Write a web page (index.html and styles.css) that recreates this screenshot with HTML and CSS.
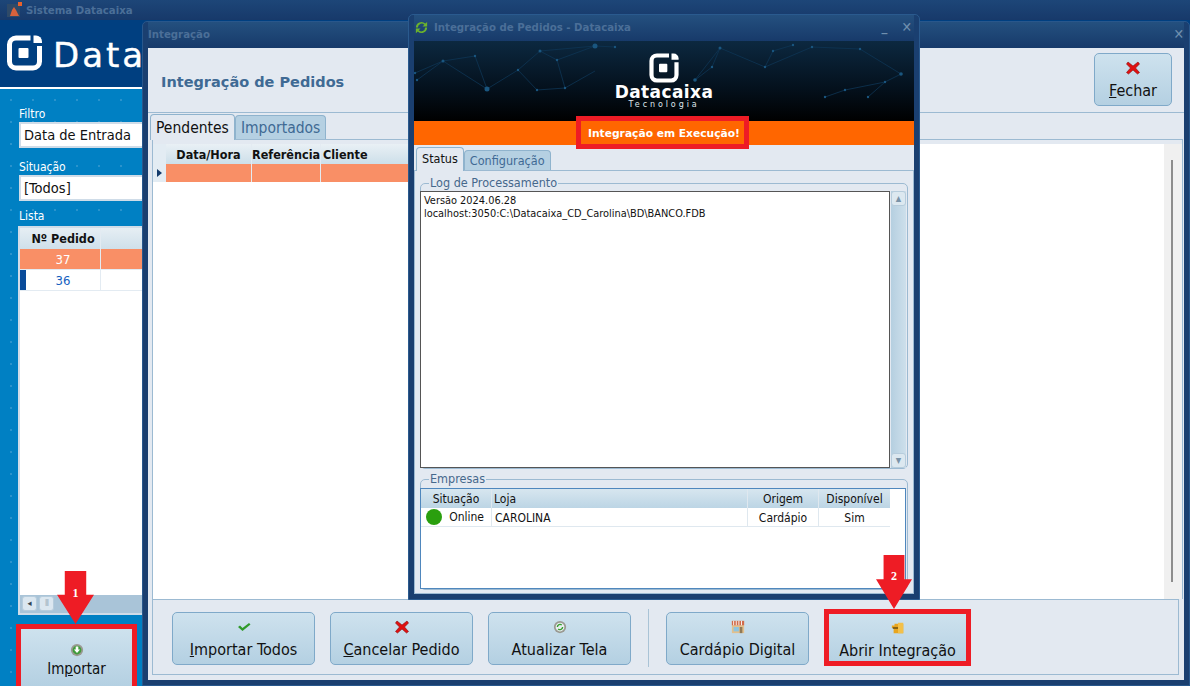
FILE: index.html
```html
<!DOCTYPE html>
<html lang="pt-BR">
<head>
<meta charset="utf-8">
<title>Sistema Datacaixa</title>
<link rel="stylesheet" href="styles.css">
</head>
<body>
<svg class="defs" width="0" height="0" aria-hidden="true">
  <symbol id="logo" viewBox="0 0 36 36">
    <path d="M24 3H9.500A6.500 6.500 0 0 0 3 9.500V26.500A6.500 6.500 0 0 0 9.500 33H26.500A6.500 6.500 0 0 0 33 26.500V11" fill="none" stroke="#fff" stroke-width="5"/>
    <rect x="12" y="13" width="10" height="10" rx="1" fill="#fff"/>
    <path d="M27 0.500h2.500a6 6 0 0 1 6 6V8H27z" fill="#fff"/>
  </symbol>
  <symbol id="xred" viewBox="0 0 14 14">
    <path d="M2 1l5 4 5-4 1.500 2-4 4 4 4.500-2 1.500-4.500-4-4.500 4-2-1.500 4-4.500-4-4z" fill="#e01010" stroke="#8c0a0a" stroke-width=".6"/>
  </symbol>
</svg>

<div class="desktop">
  <div class="titlebar">
    <svg class="app-icon" viewBox="0 0 16 16"><rect x="1" y="2" width="13" height="13" fill="#2f4a68"/><path d="M4 14l2-6 2-3 2 3 3 6z" fill="#d8623c"/><rect x="12" y="0" width="4" height="4" fill="#e8622c"/></svg>
    <span class="titletext">Sistema Datacaixa</span>
  </div>
  <div class="app-head">
    <svg class="head-logo"><use href="#logo"/></svg>
    <span class="head-word">Data</span>
  </div>
  <div class="sidebar">
    <label class="side-label">Filtro</label>
    <div class="side-input">Data de Entrada</div>
    <label class="side-label second">Situação</label>
    <div class="side-input">[Todos]</div>
    <label class="side-label third">Lista</label>
    <div class="side-list">
      <div class="list-head"><span class="list-ind"></span><b class="list-col">Nº Pedido</b><span class="list-rest"></span></div>
      <div class="list-row selected"><span class="list-ind"></span><span class="list-col">37</span><span class="list-rest"></span></div>
      <div class="list-row blue"><span class="list-ind"></span><span class="list-col">36</span><span class="list-rest"></span></div>
      <div class="list-fill"></div>
      <div class="list-scroll">
        <span class="sb-btn">◂</span><span class="sb-btn thumb">⦀</span>
      </div>
    </div>
    <button class="btn import-btn">
      <svg class="ico" viewBox="0 0 16 16"><circle cx="8" cy="8" r="7" fill="#9a9a92"/><circle cx="8" cy="8" r="5" fill="#3f9c3a"/><path d="M6.500 4h3v3.500h2L8 11.500 4.500 7.500h2z" fill="#fff"/></svg>
      <span>Im<u>p</u>ortar</span>
    </button>
  </div>

  <section class="win win-integ">
    <header class="win-title">
      <span class="titletext">Integração</span>
      <span class="win-x">✕</span>
    </header>
    <div class="win-body">
      <div class="integ-head">
        <h1 class="integ-h">Integração de Pedidos</h1>
        <button class="btn close-btn"><svg class="ico"><use href="#xred"/></svg><span><u>F</u>echar</span></button>
      </div>
      <div class="tabs integ-tabs">
        <span class="tab active">Pendentes</span>
        <span class="tab">Importados</span>
      </div>
      <div class="integ-panel">
        <div class="grid-wrap">
          <div class="grid-white">
            <div class="g-head"><span class="g-ind"></span><b class="g-a">Data/Hora</b><b class="g-b">Referência</b><b class="g-c">Cliente</b></div>
            <div class="g-row"><span class="g-ind"><i class="tri"></i></span><span class="g-a"></span><span class="g-b"></span><span class="g-c"></span></div>
          </div>
          <div class="grid-side"><span class="grid-bar"></span></div>
        </div>
      </div>
      <div class="actions">
        <button class="btn act"><svg class="ico" viewBox="0 0 14 14"><path d="M1 7l2-1.500 2.500 2.500L12 3l1.500 1.500L5.500 11z" fill="#2f9a2a"/></svg><span><u>I</u>mportar Todos</span></button>
        <button class="btn act"><svg class="ico"><use href="#xred"/></svg><span><u>C</u>ancelar Pedido</span></button>
        <button class="btn act"><svg class="ico" viewBox="0 0 16 16"><circle cx="8" cy="8" r="7" fill="#9a9a92"/><circle cx="8" cy="8" r="5" fill="#e8eef0"/><path d="M5 8a3 3 0 0 1 5-2.200M11 8a3 3 0 0 1-5 2.200" fill="none" stroke="#35a02f" stroke-width="1.600"/></svg><span>Atualizar Tela</span></button>
        <span class="act-sep"></span>
        <button class="btn act"><svg class="ico" viewBox="0 0 16 16"><rect x="1" y="1" width="14" height="14" fill="#e2c08e"/><rect x="1" y="1" width="14" height="5" fill="#d06a4a"/><path d="M3 1v5M6 1v5M9 1v5M12 1v5" stroke="#fff"/><rect x="3" y="8" width="6" height="5" fill="#8ec4e0"/><rect x="10" y="8" width="3" height="7" fill="#8f7a58"/></svg><span>Cardápio Digital</span></button>
        <button class="btn act open-btn"><svg class="ico" viewBox="0 0 16 16"><path d="M4 3h10v11H3V8H1V5h3z" fill="#e8a51e"/><path d="M8 2h6v12H8z" fill="#f3c04a"/><rect x="2" y="7" width="6" height="2" fill="#7a5a12"/></svg><span>Abrir Integração</span></button>
      </div>
    </div>
  </section>

  <section class="win win-popup">
    <header class="win-title">
      <svg class="sync" viewBox="0 0 16 16"><path d="M2 8a6 6 0 0 1 10-4.300L14 2v5H9l2-2A4 4 0 0 0 4.200 8zM14 8a6 6 0 0 1-10 4.300L2 14V9h5l-2 2a4 4 0 0 0 6.800-3z" fill="#6cb32c"/></svg>
      <span class="titletext">Integração de Pedidos - Datacaixa</span>
      <span class="win-min">_</span>
      <span class="win-x">✕</span>
    </header>
    <div class="banner">
      <svg class="net" viewBox="0 0 500 80" preserveAspectRatio="none">
        <g stroke="#0e3554" stroke-width=".8" fill="none">
          <path d="M3 39L29 20L73 48L61 15L29 20M73 48L104 29L126 10L181 5M104 29L123 49L151 47L143 19L181 5M126 10L143 19M1 32L29 20M201 6L181 5M151 47L181 30"/>
          <path d="M298 26L281 39L306 7L351 26L359 10L379 4M351 26L398 6L446 8L487 33L471 41L431 49L411 56M306 7L298 26M454 56L471 41"/>
        </g>
        <g fill="#1a567f">
          <circle cx="181" cy="5" r="2.500"/><circle cx="73" cy="48" r="2.500"/><circle cx="29" cy="20" r="1.500"/><circle cx="126" cy="10" r="1.500"/><circle cx="104" cy="29" r="1.200"/><circle cx="61" cy="15" r="1.200"/><circle cx="3" cy="39" r="1.200"/><circle cx="1" cy="32" r="1.200"/><circle cx="123" cy="49" r="1.200"/><circle cx="151" cy="47" r="1.200"/><circle cx="143" cy="19" r="1.200"/><circle cx="201" cy="6" r="1.200"/><circle cx="306" cy="7" r="1.500"/><circle cx="359" cy="10" r="1.200"/><circle cx="379" cy="4" r="1.200"/><circle cx="398" cy="6" r="1.200"/><circle cx="446" cy="8" r="1.200"/><circle cx="487" cy="33" r="1.800"/><circle cx="431" cy="49" r="1.200"/><circle cx="351" cy="26" r="1.200"/><circle cx="298" cy="26" r="1.200"/><circle cx="281" cy="39" r="1.800"/><circle cx="471" cy="41" r="1.200"/><circle cx="411" cy="56" r="1.200"/><circle cx="454" cy="56" r="1.200"/>
        </g>
      </svg>
      <svg class="banner-logo"><use href="#logo"/></svg>
      <span class="banner-word">Datacaixa</span>
      <span class="banner-sub">Tecnologia</span>
    </div>
    <div class="status-bar">Integração em Execução!</div>
    <div class="tabs popup-tabs">
      <span class="tab active">Status</span>
      <span class="tab">Configuração</span>
    </div>
    <div class="popup-panel">
      <fieldset class="fs fs-log">
        <legend>Log de Processamento</legend>
        <div class="log-wrap">
          <div class="log">Versão 2024.06.28<br>localhost:3050:C:\Datacaixa_CD_Carolina\BD\BANCO.FDB</div>
          <div class="vscroll"><span class="vs-btn">▴</span><span class="vs-track"></span><span class="vs-btn">▾</span></div>
        </div>
      </fieldset>
      <fieldset class="fs fs-emp">
        <legend>Empresas</legend>
        <div class="emp">
          <div class="emp-head">
            <span class="c1 mid">Situação</span><span class="c2">Loja</span><span class="c3 mid">Origem</span><span class="c4 mid">Disponível</span>
          </div>
          <div class="emp-row">
            <span class="c1 online"><i class="dot"></i>Online</span><span class="c2 loja">CAROLINA</span><span class="c3 mid">Cardápio</span><span class="c4 mid">Sim</span>
          </div>
        </div>
      </fieldset>
    </div>
  </section>

  <div class="redbox rb-import"></div>
  <div class="redbox rb-status"></div>
  <div class="redbox rb-open"></div>
  <div class="arrow ar-1"><span>1</span></div>
  <div class="arrow ar-2"><span>2</span></div>
</div>
</body>
</html>
```

FILE: styles.css
```css
* { box-sizing: border-box; }
html, body { margin: 0; padding: 0; }
body { width: 1190px; height: 686px; overflow: hidden; font-family: "DejaVu Sans", sans-serif; font-stretch: condensed; color: #111; background: #0080c3; }
.defs { position: absolute; }
.desktop { position: relative; width: 1190px; height: 686px; overflow: hidden; display: flex; flex-direction: column; }

.titlebar { height: 20px; flex: none; display: flex; align-items: center; padding-left: 6px; gap: 4px; background: linear-gradient(#1d4678, #17396a); }
.app-icon { width: 16px; height: 16px; }
.titletext { font-weight: 700; font-size: 10.200px; font-stretch: normal; color: #4b6f98; white-space: nowrap; }

.app-head { height: 69px; flex: none; display: flex; align-items: center; gap: 10px; padding: 0 0 2px 6px; background: #003f80; border-bottom: 2px solid #fff; }
.head-logo { width: 37px; height: 36px; }
.head-word { font-family: "DejaVu Sans", sans-serif; font-stretch: normal; font-size: 34px; line-height: 40px; letter-spacing: 3px; padding-top: 5px; color: #fff; font-weight: 400; -webkit-text-stroke: .4px #fff; }

.sidebar { flex: 1; min-height: 0; display: flex; flex-direction: column; padding: 18px 0 0 19px; background: #0080c3 radial-gradient(#2a93cc 1px, transparent 1px) 0 0 / 22px 22px; }
.side-label { font-size: 12px; line-height: 14px; color: #fff; }
.side-label.second { margin-top: 12px; }
.side-label.third { margin-top: 8px; }
.side-input { width: 250px; height: 26px; margin-top: 1px; padding-left: 3px; font-size: 14.500px; line-height: 22px; background: #fff; border: 2px solid #cfdce8; }
.side-input + .side-label.second + .side-input { line-height: 23px; }
.side-list { width: 250px; height: 389px; margin: 3px 0 0 -1px; display: flex; flex-direction: column; background: #fff; border: 2px solid #cfdce8; }
.list-head, .list-row { display: flex; flex: none; }
.list-head { height: 21px; background: linear-gradient(#e6eef4, #cfe0ea); font-size: 12.500px; line-height: 21px; }
.list-row { height: 21px; line-height: 21px; font-size: 13px; border-bottom: 1px solid #e3ebf2; }
.list-ind { width: 6px; flex: none; }
.list-col { width: 75px; flex: none; text-align: center; border-right: 1px solid #e3ebf2; }
.list-rest { flex: 1; }
.list-row.selected { background: #f98f66; color: #fff; }
.list-row.blue { color: #1560c0; }
.list-row.blue .list-ind { background: #0a4c9a; }
.list-fill { flex: 1; }
.list-scroll { height: 18px; flex: none; display: flex; gap: 2px; padding: 1px 2px; background: #a9c4d8; }
.sb-btn { width: 15px; height: 15px; border: 1px solid #b6ccdc; border-radius: 3px; background: #dbe7f0; font-size: 9px; line-height: 13px; text-align: center; color: #345; }
.sb-btn.thumb { color: #9ab; }

.btn { display: flex; flex-direction: column; align-items: center; justify-content: flex-end; gap: 6px; padding: 0 0 4px; font: inherit; font-size: 16px; line-height: 20px; color: #111; background: linear-gradient(#cee2ee, #b4d0e2); border: 1px solid #7fa9c9; border-radius: 5px; }
.ico { width: 14px; height: 14px; flex: none; }
.import-btn { width: 111px; height: 58px; margin: 13px 0 0 2px; padding-bottom: 7px; gap: 2px; font-size: 15px; border: 0; border-radius: 0; flex: none; }

.win { position: absolute; display: flex; flex-direction: column; background: #1a3f70; border: 1px solid #28578c; border-radius: 5px 5px 0 0; }
.win-title { height: 26px; flex: none; display: flex; align-items: center; padding: 0 0 2px; gap: 5px; background: linear-gradient(#24507f, #173a6a); }
.win-x { margin-left: auto; font-size: 14px; font-weight: 700; line-height: 14px; color: #6f8fae; }
.win-min { margin-left: auto; color: #6f8fae; font-size: 13px; font-weight: 700; line-height: 12px; }
.win-min + .win-x { margin-left: 9px; margin-right: 2px; }

.win-integ { left: 142px; top: 21px; width: 1048px; height: 665px; padding: 0 5px 5px; }
.win-body { flex: 1; min-height: 0; display: flex; flex-direction: column; background: #e3e9f1; }
.integ-head { height: 65px; flex: none; display: flex; align-items: flex-start; justify-content: space-between; padding: 0 12px 0 13px; border-bottom: 1px solid #9cbad2; }
.integ-h { margin: 25px 0 0; font-size: 14.500px; line-height: 18px; font-weight: 700; font-stretch: normal; color: #3f6a94; }
.close-btn { width: 78px; height: 53px; margin-top: 5px; }

.tabs { display: flex; align-items: flex-end; flex: none; }
.tab { font-size: 15.500px; border: 1px solid #8fb3cd; border-bottom: 0; border-radius: 4px 4px 0 0; background: #b5d0e2; color: #3f6a94; padding: 0 5px; height: 24px; line-height: 25px; }
.tab.active { background: #e3e9f1; color: #111; height: 26px; line-height: 26px; position: relative; top: 1px; z-index: 1; }
.integ-tabs { height: 26px; padding-left: 2px; }
.integ-panel { flex: 1; min-height: 0; margin: 0 1px 0 4px; padding: 4px 0 0; border: 1px solid #9cbad2; border-bottom: 0; display: flex; }
.grid-wrap { flex: 1; display: flex; min-width: 0; }
.grid-white { flex: 1; background: #fff; }
.grid-side { width: 18px; flex: none; background: #f0f0f0; padding: 16px 0 0 7px; }
.grid-bar { display: block; width: 2px; height: 422px; background: #8c8c8c; }
.g-head, .g-row { display: flex; width: 300px; }
.g-head { height: 20px; font-size: 12.500px; line-height: 22px; background: linear-gradient(#e9f0f5, #cddfe9); }
.g-row { height: 18px; background: #f98f66; }
.g-ind { width: 13px; flex: none; background: #e3ecf3; display: flex; align-items: center; justify-content: center; }
.g-a { width: 86px; flex: none; text-align: center; border-right: 1px solid #e3ebf2; }
.g-b { width: 69px; flex: none; text-align: center; border-right: 1px solid #e3ebf2; }
.g-c { flex: 1; padding-left: 2px; }
.tri { width: 0; height: 0; border-left: 5px solid #123a6a; border-top: 4px solid transparent; border-bottom: 4px solid transparent; }

.actions { height: 76px; flex: none; margin: 0 5px 5px 4px; padding: 12px 0 0 19px; display: flex; align-items: flex-start; gap: 15px; border: 1px solid #9cbad2; }
.act { width: 143px; height: 53px; }
.act-sep { width: 1px; height: 58px; margin: -3px 2px 0; background: #a9c3d6; }
.open-btn { border: 0; width: 137px; margin-left: 5px; border-radius: 0; }

.win-popup { left: 408px; top: 14px; width: 512px; height: 586px; padding: 0 5px 5px; border-color: #2a5a8e; }
.sync { width: 15px; height: 15px; flex: none; }
.banner { position: relative; height: 80px; flex: none; display: flex; flex-direction: column; align-items: center; overflow: hidden; background: linear-gradient(#0c2840, #04101c 60%, #000); }
.net { position: absolute; inset: 0; width: 100%; height: 100%; }
.banner-logo { position: relative; width: 30px; height: 30px; margin-top: 12px; flex: none; }
.banner-word { position: relative; font-size: 17px; font-weight: 700; font-stretch: normal; line-height: 14px; letter-spacing: .4px; color: #fff; margin-top: 2px; }
.banner-sub { position: relative; font-size: 8px; font-stretch: normal; line-height: 9px; letter-spacing: 2.900px; color: #dfe6ec; margin-top: 1px; }
.status-bar { height: 24px; flex: none; background: #ff6600; color: #fff; font-weight: 700; font-size: 10.700px; font-stretch: normal; line-height: 25px; text-align: center; }
.popup-tabs { height: 25px; background: #e3e9f1; padding-left: 2px; }
.popup-tabs .tab { font-size: 12.500px; height: 20px; line-height: 19px; padding: 0 5px; }
.popup-tabs .tab.active { height: 24px; line-height: 22px; color: #111; }
.popup-panel { flex: 1; min-height: 0; display: flex; flex-direction: column; background: #e3e9f1; border: 1px solid #9cbad2; padding: 0 5px 3px; }
.fs { margin: 0; padding: 0; border: 1px solid #9cbad2; border-radius: 5px; min-width: 0; }
.fs legend { margin-left: 8px; padding: 0 1px; font-size: 12.500px; line-height: 14px; color: #46688c; }
.fs-log { height: 293px; flex: none; margin-top: 5px; }
.log-wrap { display: flex; height: 277px; margin: 1px 0 0 -1px; }
.log { flex: 1; background: #fff; border: 1px solid #555; padding: 2px 3px; font-size: 10.900px; line-height: 13px; }
.vscroll { width: 15px; flex: none; margin: 0 1px 0 1px; display: flex; flex-direction: column; background: linear-gradient(90deg, #b5cfe0, #cddfeb); }
.vs-btn { height: 15px; flex: none; background: #dce8f0; border: 1px solid #b6ccdc; border-radius: 3px; font-size: 12px; line-height: 12px; text-align: center; color: #7a93a8; }
.vs-track { flex: 1; }
.fs-emp { flex: 1; min-height: 0; margin-top: 3px; }
.emp { height: 101px; margin: 2px 1px 0 -1px; background: #fff; border: 1px solid #4f87bd; font-size: 12px; }
.emp-head, .emp-row { display: flex; height: 19px; width: 469px; line-height: 21px; }
.emp-head { background: linear-gradient(#d7e6ef, #bcd5e5); }
.emp-row { border-bottom: 1px solid #dfe8ef; }
.c1 { width: 71px; flex: none; border-right: 1px solid #dfe8ef; }
.c2 { width: 256px; flex: none; padding-left: 2px; border-right: 1px solid #dfe8ef; }
.c3 { width: 71px; flex: none; border-right: 1px solid #dfe8ef; }
.c4 { flex: 1; }
.mid { text-align: center; }
.loja { padding-left: 3px; }
.online { display: flex; align-items: center; justify-content: space-between; padding: 0 7px 0 5px; }
.dot { width: 16px; height: 16px; border-radius: 50%; background: #2a9f0e; }

.redbox { position: absolute; border: 5px solid #ee1c25; pointer-events: none; }
.rb-import { left: 16px; top: 624px; width: 121px; height: 70px; }
.rb-status { left: 576px; top: 116px; width: 173px; height: 33px; }
.rb-open { left: 824px; top: 609px; width: 147px; height: 57px; }

.arrow { position: absolute; background: #ee1c25; clip-path: polygon(21% 0, 79% 0, 79% 45%, 100% 45%, 50% 100%, 0 45%, 21% 45%); color: #fff; font: 700 12px "Liberation Serif", serif; text-align: center; }
.ar-1 { left: 57px; top: 571px; width: 37px; height: 53px; padding-top: 15px; }
.ar-2 { left: 876px; top: 555px; width: 36px; height: 54px; padding-top: 14px; }
```
